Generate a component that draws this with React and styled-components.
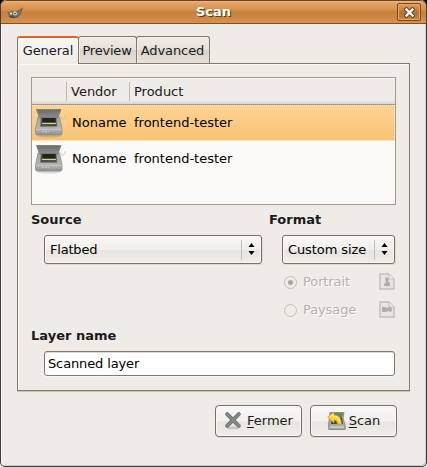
import React from "react";
import styled, { createGlobalStyle, css } from "styled-components";

const Global = createGlobalStyle`
  *, *::before, *::after { box-sizing: border-box; }
  body { margin: 0; background: #fff; }
`;

const Window = styled.div`
  width: 427px;
  height: 467px;
  display: flex;
  flex-direction: column;
  overflow: hidden;
  background: #efebe7;
  border: 1px solid #443c39;
  border-top: 0;
  border-radius: 6px 6px 5px 5px;
  box-shadow: inset -1px -1px 0 #cfcac5, inset 1px 0 0 #faf8f6;
  font-family: "DejaVu Sans", sans-serif;
  font-size: 13px;
  line-height: 16px;
  color: #1a1a1a;
`;

const Corners = styled.div`
  width: 427px;
  height: 467px;
  background: linear-gradient(#000 0 12px, #fff 12px);
`;

const TitleBar = styled.header`
  flex: none;
  height: 24px;
  display: grid;
  grid-template-columns: 31px 1fr 31px;
  align-items: center;
  border-top: 1px solid #6b4322;
  border-bottom: 1px solid #7c5129;
  border-radius: 6px 6px 0 0;
  background: linear-gradient(#eeb986 0, #e4a264 2px, #d68f4b 9px, #c77f38 11px, #c98440 14px, #d79250 22px);
`;

const Title = styled.h1`
  margin: 0;
  text-align: center;
  font-size: 13px;
  line-height: 16px;
  color: #fff;
  text-shadow: 1px 1px 0 #5e3b1a;
`;

const CloseButton = styled.button`
  width: 24px;
  height: 18px;
  padding: 0;
  margin: 0 0 0 2px;
  display: grid;
  place-items: center;
  border: 1px solid #79491f;
  border-radius: 2px;
  background: linear-gradient(#dda266, #ba7026 55%, #c88340);
  box-shadow: inset 0 0 0 1px #e1a76c;
`;

const Content = styled.main`
  flex: 1;
  padding: 12px 17px 0 16px;
`;

const Tabs = styled.nav`
  height: 28px;
  display: flex;
  align-items: flex-end;
`;

const Tab = styled.button`
  width: ${(p) => p.$width}px;
  height: 27px;
  margin: 0 0 1px -1px;
  padding: ${(p) => p.$pad || "0"};
  border: 1px solid #857868;
  border-bottom: 0;
  border-radius: 3px 3px 0 0;
  background: linear-gradient(#efebe7, #e5e0db 50%, #d8d2cb 52%, #e6e1dc);
  box-shadow: inset 1px 1px 0 #f3f0ed;
  font: inherit;
  letter-spacing: ${(p) => p.$spacing || 0}px;
  color: inherit;
  white-space: nowrap;
  ${(p) =>
    p.$active &&
    css`
      z-index: 1;
      height: 28px;
      margin: 0;
      padding: 0 0 1px;
      border-top: 2px solid #dc6827;
      background: linear-gradient(#f8f7f5, #efebe7);
    `}
`;

const Panel = styled.section`
  width: 393px;
  height: 328px;
  margin-top: -1px;
  padding: 13px 13px 0;
  border: 1px solid #857868;
  box-shadow: inset 1px 1px 0 #faf9f7, 0 1px 0 #cdc3b9;
`;

const Table = styled.div`
  width: 365px;
  height: 128px;
  border: 1px solid #a59789;
  background: #fbfaf8;
`;

const Header = styled.div`
  height: 27px;
  display: grid;
  grid-template-columns: 35px 63px 1fr;
  align-items: center;
  border-bottom: 1px solid #a59789;
  background: linear-gradient(#efebe7 22px, #d8d4ce);
  box-shadow: inset 0 1px 0 #faf8f6;
`;

const HeaderCell = styled.span`
  height: 19px;
  padding: 2px 0 0 4px;
  border-right: ${(p) => (p.$divider ? "1px solid #bdb7b2" : "0")};
`;

const Row = styled.div`
  height: 36px;
  display: grid;
  grid-template-columns: 40px 62px 1fr;
  align-items: center;
  color: #000;
  border: 1px ${(p) => (p.$selected ? "dotted #fff4df" : "solid transparent")};
  border-left-width: 0;
  background: ${(p) => (p.$selected ? "linear-gradient(#ffd294, #f7c473)" : "none")};
  background-clip: border-box;
`;

const Choices = styled.div`
  display: grid;
  grid-template-columns: 238px 126px;
`;

const Heading = styled.h2`
  margin: ${(p) => p.$top}px 0 7px;
  font-size: 13px;
  line-height: 16px;
`;

const Select = styled.button`
  width: ${(p) => p.$width}px;
  height: 29px;
  margin-left: 13px;
  padding: 0 5px;
  display: flex;
  align-items: center;
  border: 1px solid #7d7062;
  border-radius: 3px;
  background: linear-gradient(#f9f8f6, #f1eeeb 50%, #e8e4df 54%, #f0edea);
  box-shadow: inset 0 0 0 1px #f8f7f5, 1px 1px 0 #dfdad5;
  font: inherit;
  color: #000;
  letter-spacing: ${(p) => p.$spacing || 0}px;
`;

const SelectText = styled.span`
  flex: 1;
  text-align: left;
  white-space: nowrap;
`;

const Arrows = styled.span`
  height: 20px;
  width: 15px;
  padding: 0 0 1px 6px;
  display: flex;
  align-items: center;
  border-left: 1px solid #c6bfb8;
`;

const Radios = styled.div`
  display: grid;
  gap: 11px;
  padding: 9px 0 0 15px;
`;

const RadioRow = styled.label`
  height: 17px;
  display: grid;
  grid-template-columns: 19px 76px 16px;
  align-items: center;
  color: #b7b1ab;
  text-shadow: 1px 1px 0 #fff;
  letter-spacing: -0.1px;
`;

const Radio = styled.span`
  width: 13px;
  height: 13px;
  margin-top: 1px;
  display: grid;
  place-items: center;
  border: 1px solid #c6bfb7;
  border-radius: 50%;

  &::after {
    content: "";
    width: 5px;
    height: 5px;
    border-radius: 50%;
    background: ${(p) => (p.$checked ? "#aaa49e" : "transparent")};
  }
`;

const Entry = styled.input`
  display: block;
  width: 351px;
  height: 25px;
  margin-left: 13px;
  padding: 0 3px;
  border: 1px solid #857868;
  border-radius: 3px;
  outline: 0;
  background: #fff;
  box-shadow: inset 0 1px 0 #ddd9d5, 0 1px 0 #f9f7f5;
  font: inherit;
  letter-spacing: -0.13px;
  color: #000;
`;

const Actions = styled.footer`
  display: flex;
  justify-content: flex-end;
  gap: 8px;
  padding: 14px 12px 0 0;
`;

const ActionButton = styled.button`
  width: 87px;
  height: 32px;
  padding: 0 0 1px;
  display: flex;
  align-items: center;
  justify-content: center;
  gap: ${(p) => p.$gap}px;
  border: 1px solid #7d7062;
  border-radius: 4px;
  background: linear-gradient(#f9f8f6, #f2efec 50%, #e8e4df 53%, #f0edea);
  box-shadow: inset 0 0 0 1px #f8f7f5, 0 1px 0 #dfdad5;
  font: inherit;
  color: inherit;
`;

const Mnemonic = styled.span`
  text-decoration: underline;
  text-decoration-thickness: 1px;
  text-underline-offset: 2px;
`;

const Wilber = styled.svg`
  display: block;
  margin: 1px 0 0 6px;
`;

const ScannerSvg = styled.svg`
  display: block;
  margin-left: 2px;
`;

function WilberIcon() {
  return (
    <Wilber width="17" height="12" viewBox="0 0 17 12">
      <path d="M.3 4.5 2.5 5.5 4.5 3.5 7 5Q10 4.5 12 3L16 .3Q15.5 4 13 8 11 11.2 7 11.2 2 10.5 .3 4.5Z" fill="#62635a" />
      <path d="M9 7 15 1.5 12 8 8 10Z" fill="#77796b" />
      <circle cx="4" cy="6.5" r="1.3" fill="#d5d5ce" />
      <circle cx="8" cy="6.5" r="1.9" fill="#d8d8d4" />
      <circle cx="8" cy="6.5" r=".8" fill="#222" />
      <path d="M1 8.5Q4 10 8 9.5L6 11Q3 11 1 8.5" fill="#353a37" />
    </Wilber>
  );
}

function ScannerIcon() {
  return (
    <ScannerSvg width="33" height="32" viewBox="0 0 33 32">
      <defs>
        <linearGradient id="lid" x2="0" y2="1">
          <stop stopColor="#686b68" />
          <stop offset="1" stopColor="#8b8e8b" />
        </linearGradient>
        <linearGradient id="body" x2="0" y2="1">
          <stop stopColor="#a4a6a3" />
          <stop offset=".7" stopColor="#b4b6b4" />
          <stop offset="1" stopColor="#8b8d8a" />
        </linearGradient>
      </defs>
      <ellipse cx="15" cy="28.8" rx="12" ry="1.8" fill="#555" opacity=".2" />
      <path d="M25 11Q26 8 27.5 11T31 10V8" fill="none" stroke="#bdbdb8" strokeOpacity=".75" />
      <path d="M4 10H25.5L28 22V26.5Q28 28 26 28H4Q1.5 28 1.5 26.5V22Z" fill="url(#body)" stroke="#8d8f8c" strokeWidth=".8" />
      <path d="M2.5 2.5H27L24 10.5H5.5Z" fill="url(#lid)" stroke="#777a76" strokeWidth=".8" />
      <path d="M7 10.5H22.5L23 19.5H6.5Z" fill="#4c504b" stroke="#7e807c" strokeWidth=".8" />
      <path d="M8.5 11H21.5V15H8.5Z" fill="#202421" />
      <path d="M8 16.5H22" stroke="#d8d28b" />
      <path d="M8 17.5H22" stroke="#55522e" />
      <path d="M2.5 22.5H27.5" stroke="#c9cbc9" strokeWidth=".7" />
      <path d="M8 24.5h2m1 0h2m1 0h1" stroke="#d5d6d4" strokeWidth=".8" />
    </ScannerSvg>
  );
}

function UpDown() {
  return (
    <svg width="7" height="14" viewBox="0 0 7 14">
      <path d="M3.5 1 6.5 5H.5ZM.5 9H6.5L3.5 13Z" fill="#000" />
    </svg>
  );
}

function PageIcon({ landscape }) {
  return (
    <svg width="16" height="17" viewBox="0 0 16 17">
      <path d="M1 1H10L15 6V16H1Z" fill="#e8e4e0" stroke="#c2bdb8" strokeWidth="1.4" />
      <path d="M10 1V6H15" fill="#efebe7" stroke="#c5c0bb" />
      {landscape ? (
        <path d="M3 6H6L8 7 10 6 12 6 13 8V10L11 11 9 10 7 11H3Z" fill="#b2ada8" />
      ) : (
        <path d="M6 5 8 4 10 6 9 8 11 10V13H5V11L7 9Z" fill="#b2ada8" />
      )}
    </svg>
  );
}

function CrossIcon() {
  return (
    <svg width="18" height="19" viewBox="0 0 18 19">
      <ellipse cx="9" cy="17" rx="6" ry="1.5" fill="#c9c5c1" />
      <path d="M3.2 3.2 14.8 14.8M14.8 3.2 3.2 14.8" stroke="#6d716d" strokeWidth="4" strokeLinecap="round" />
      <path d="M3.2 3.2 14.8 14.8M14.8 3.2 3.2 14.8" stroke="#858985" strokeWidth="2.4" strokeLinecap="round" />
    </svg>
  );
}

function ScanIcon() {
  return (
    <svg width="19" height="20" viewBox="0 0 19 20">
      <path d="M3 1.5H17L16 7 18.2 15V18.5H1.7V13Z" fill="#a6a8a5" stroke="#8b8d89" />
      <path d="M4 2H16L15 7H5Z" fill="#777a75" />
      <path d="M5 7H15L16 13H4Z" fill="#444741" />
      <path d="M3 15H17V17H3Z" fill="#c4c6c2" />
      <path d="M.8 6 7 1V4Q14 4 14.5 13H10.5Q10.5 9 7 9V12Z" fill="#f5dc35" stroke="#c6a514" strokeWidth=".8" />
      <path d="M2.5 6 6 3.2V5Q12 5 13 10" fill="none" stroke="#fff392" />
    </svg>
  );
}

export default function App() {
  return (
    <Corners>
      <Global />
      <Window>
        <TitleBar>
          <WilberIcon />
          <Title>Scan</Title>
          <CloseButton aria-label="Close">
            <svg width="11" height="11" viewBox="0 0 11 11">
              <path d="M2.5 2.5 8.5 8.5M8.5 2.5 2.5 8.5" stroke="#70401a" strokeWidth="4.5" strokeLinecap="square" />
              <path d="M2.5 2.5 8.5 8.5M8.5 2.5 2.5 8.5" stroke="#fff" strokeWidth="2.4" strokeLinecap="square" />
            </svg>
          </CloseButton>
        </TitleBar>
        <Content>
          <Tabs>
            <Tab $active $width={62} $spacing={-0.1}>General</Tab>
            <Tab $width={59} $spacing={-0.2} $pad="1px 1px 0 0">Preview</Tab>
            <Tab $width={74} $spacing={-0.1} $pad="1px 1px 0 0">Advanced</Tab>
          </Tabs>
          <Panel>
            <Table>
              <Header>
                <HeaderCell $divider />
                <HeaderCell $divider>Vendor</HeaderCell>
                <HeaderCell>Product</HeaderCell>
              </Header>
              <Row $selected>
                <ScannerIcon />
                <span>Noname</span>
                <span>frontend-tester</span>
              </Row>
              <Row>
                <ScannerIcon />
                <span>Noname</span>
                <span>frontend-tester</span>
              </Row>
            </Table>
            <Choices>
              <div>
                <Heading $top={7}>Source</Heading>
                <Select $width={218} $spacing={-0.2}>
                  <SelectText>Flatbed</SelectText>
                  <Arrows><UpDown /></Arrows>
                </Select>
              </div>
              <div>
                <Heading $top={7}>Format</Heading>
                <Select $width={113} $spacing={-0.1}>
                  <SelectText>Custom size</SelectText>
                  <Arrows><UpDown /></Arrows>
                </Select>
                <Radios>
                  <RadioRow><Radio $checked />Portrait<PageIcon /></RadioRow>
                  <RadioRow><Radio />Paysage<PageIcon landscape /></RadioRow>
                </Radios>
              </div>
            </Choices>
            <Heading $top={10}>Layer name</Heading>
            <Entry defaultValue="Scanned layer" />
          </Panel>
          <Actions>
            <ActionButton $gap={5}>
              <CrossIcon />
              <span><Mnemonic>F</Mnemonic>ermer</span>
            </ActionButton>
            <ActionButton $gap={3}>
              <ScanIcon />
              <span><Mnemonic>S</Mnemonic>can</span>
            </ActionButton>
          </Actions>
        </Content>
      </Window>
    </Corners>
  );
}
